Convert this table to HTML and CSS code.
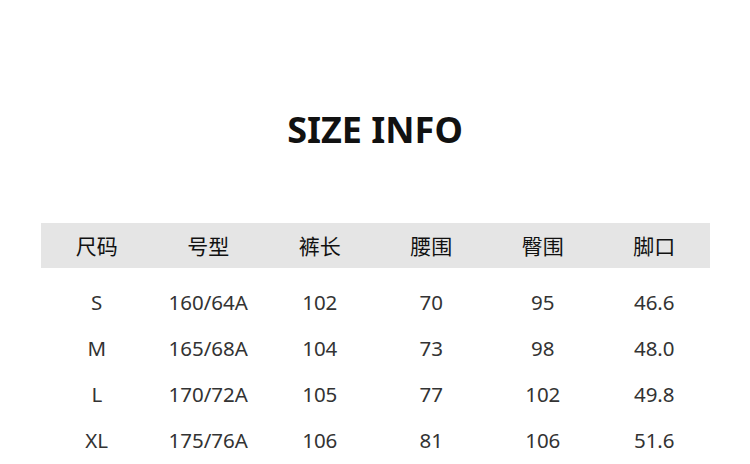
FILE: index.html
```html
<!DOCTYPE html>
<html lang="zh">
<head>
<meta charset="utf-8">
<link rel="stylesheet" href="styles.css">
</head>
<body>
<div class="page">
  <h1 class="title">SIZE INFO</h1>
  <div class="table">
    <div class="row head">
      <div class="cell">尺码</div>
      <div class="cell">号型</div>
      <div class="cell">裤长</div>
      <div class="cell">腰围</div>
      <div class="cell">臀围</div>
      <div class="cell">脚口</div>
    </div>
    <div class="body">
      <div class="row">
        <div class="cell">S</div><div class="cell">160/64A</div><div class="cell">102</div><div class="cell">70</div><div class="cell">95</div><div class="cell">46.6</div>
      </div>
      <div class="row">
        <div class="cell">M</div><div class="cell">165/68A</div><div class="cell">104</div><div class="cell">73</div><div class="cell">98</div><div class="cell">48.0</div>
      </div>
      <div class="row">
        <div class="cell">L</div><div class="cell">170/72A</div><div class="cell">105</div><div class="cell">77</div><div class="cell">102</div><div class="cell">49.8</div>
      </div>
      <div class="row">
        <div class="cell">XL</div><div class="cell">175/76A</div><div class="cell">106</div><div class="cell">81</div><div class="cell">106</div><div class="cell">51.6</div>
      </div>
    </div>
  </div>
</div>
</body>
</html>
```
FILE: styles.css
```css
html, body {
  margin: 0;
  padding: 0;
  background: #ffffff;
}
.page {
  width: 750px;
  height: 464px;
  overflow: hidden;
  font-family: "Noto Sans", "Noto Sans CJK SC", sans-serif;
}
.title {
  margin: 0;
  padding-top: 106px;
  height: 48px;
  line-height: 48px;
  text-align: center;
  font-size: 36px;
  font-weight: 700;
  color: #111111;
}
.table {
  margin: 69px 40px 0 41px;
}
.row {
  display: grid;
  grid-template-columns: repeat(6, 1fr);
}
.head {
  background: #e5e5e5;
  height: 45px;
  align-items: center;
  font-size: 21px;
  color: #111111;
  font-family: "Noto Sans CJK SC", sans-serif;
}
.body {
  padding-top: 11px;
}
.body .row {
  height: 46px;
  align-items: center;
  font-size: 20.5px;
  color: #333333;
}
.cell {
  text-align: center;
  line-height: 1;
}
```
